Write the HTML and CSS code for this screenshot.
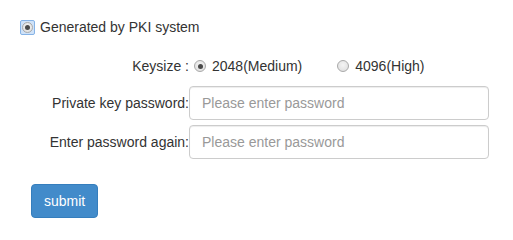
FILE: index.html
```html
<!DOCTYPE html>
<html>
<head>
<meta charset="utf-8">
<link rel="stylesheet" href="styles.css">
</head>
<body>
<div class="page">
  <label class="source">
    <span class="focus-ring"><input type="radio" class="radio" name="src" checked></span>
    <span class="source-text">Generated by PKI system</span>
  </label>
  <div class="row keysize">
    <div class="label-col">Keysize :</div>
    <div class="field-col radios">
      <label class="opt"><input type="radio" class="radio" name="ks" checked><span>2048(Medium)</span></label>
      <label class="opt opt2"><input type="radio" class="radio" name="ks"><span>4096(High)</span></label>
    </div>
  </div>
  <div class="row pw">
    <div class="label-col">Private key password:</div>
    <div class="field-col"><input type="password" class="form-control" placeholder="Please enter password"></div>
  </div>
  <div class="row pw pw2">
    <div class="label-col">Enter password again:</div>
    <div class="field-col"><input type="password" class="form-control" placeholder="Please enter password"></div>
  </div>
  <div class="actions">
    <button type="button" class="btn">submit</button>
  </div>
</div>
</body>
</html>
```
FILE: styles.css
```css
html, body {
  margin: 0;
  padding: 0;
  background: #fff;
}
body {
  font-family: "Liberation Sans", Arial, sans-serif;
  font-size: 14px;
  color: #333;
  line-height: 20px;
}
.page {
  padding-top: 17px;
}
.source {
  display: flex;
  align-items: center;
  padding-left: 20px;
  height: 20px;
}
.focus-ring {
  display: inline-flex;
  align-items: center;
  justify-content: center;
  width: 13px;
  height: 13px;
  background: #cfe2f8;
  border: 1px solid #86b3e6;
  border-radius: 2px;
}
.source-text {
  margin-left: 5px;
}
.radio {
  -webkit-appearance: none;
  appearance: none;
  margin: 0;
  width: 11px;
  height: 11px;
  border-radius: 50%;
  border: 1px solid #a9a9a9;
  background: radial-gradient(circle at 50% 40%, #f4f4f4 0%, #dcdcdc 100%);
  position: relative;
  box-sizing: border-box;
  flex: none;
}
.radio:checked::after {
  content: "";
  position: absolute;
  left: 2px;
  top: 2px;
  width: 5px;
  height: 5px;
  border-radius: 50%;
  background: #4a4a4a;
}
.focus-ring .radio {
  width: 11px;
  height: 11px;
}
.row {
  display: flex;
  align-items: center;
}
.label-col {
  width: 189px;
  text-align: right;
  flex: none;
}
.keysize {
  margin-top: 19px;
  height: 20px;
}
.radios {
  display: flex;
  align-items: center;
}
.opt {
  display: flex;
  align-items: center;
}
.opt .radio {
  width: 12px;
  height: 12px;
  margin-left: 5px;
  margin-right: 6px;
}
.opt .radio:checked::after {
  left: 2.5px;
  top: 2.5px;
}
.opt2 {
  margin-left: 30px;
}
.pw {
  margin-top: 10px;
}
.pw2 {
  margin-top: 5px;
}
.form-control {
  display: block;
  box-sizing: border-box;
  width: 300px;
  height: 34px;
  padding: 6px 12px;
  font-family: inherit;
  font-size: 14px;
  line-height: 20px;
  color: #555;
  background: #fff;
  border: 1px solid #ccc;
  border-radius: 4px;
  box-shadow: inset 0 1px 1px rgba(0,0,0,0.075);
  outline: none;
  margin: 0;
}
.form-control::placeholder {
  color: #999;
}
.actions {
  margin-top: 25px;
  padding-left: 31px;
}
.btn {
  box-sizing: border-box;
  height: 34px;
  padding: 6px 12px;
  font-family: inherit;
  font-size: 14px;
  line-height: 20px;
  color: #fff;
  background: #428bca;
  border: 1px solid #357ebd;
  border-radius: 4px;
  cursor: pointer;
}
```
